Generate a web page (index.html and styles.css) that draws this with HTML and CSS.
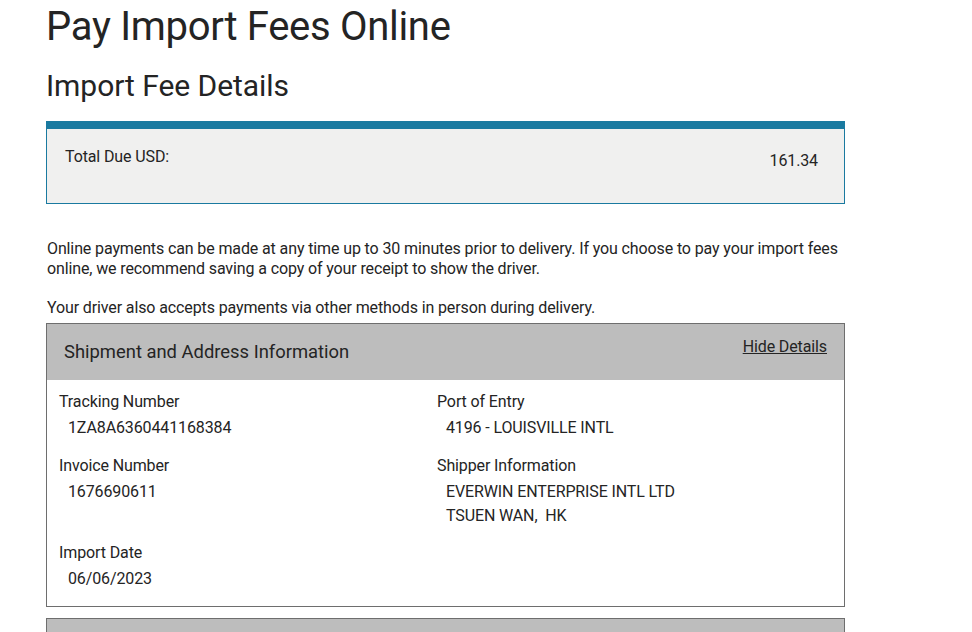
FILE: index.html
```html
<!DOCTYPE html>
<html lang="en">
<head>
    <meta charset="UTF-8">
    <meta name="viewport" content="width=device-width, initial-scale=1.0">
    <title>Pay Import Fees Online</title>
    <link rel="stylesheet" href="styles.css">
</head>
<body>
    <div class="page">
        <h1 class="page-title">Pay Import Fees Online</h1>
        <h2 class="section-title">Import Fee Details</h2>

        <div class="total-box">
            <span>Total Due USD:</span>
            <span class="amount">161.34</span>
        </div>

        <p class="note">Online payments can be made at any time up to 30 minutes prior to delivery. If you choose to pay your import fees online, we recommend saving a copy of your receipt to show the driver.</p>
        <p class="note note-last">Your driver also accepts payments via other methods in person during delivery.</p>

        <div class="panel">
            <div class="panel-header">
                <span class="panel-title">Shipment and Address Information</span>
                <a href="#" class="toggle">Hide Details</a>
            </div>
            <div class="panel-body">
                <div class="field">
                    <div class="label">Tracking Number</div>
                    <div class="value">1ZA8A6360441168384</div>
                </div>
                <div class="field">
                    <div class="label">Port of Entry</div>
                    <div class="value">4196 - LOUISVILLE INTL</div>
                </div>
                <div class="field">
                    <div class="label">Invoice Number</div>
                    <div class="value">1676690611</div>
                </div>
                <div class="field">
                    <div class="label">Shipper Information</div>
                    <div class="value">EVERWIN ENTERPRISE INTL LTD</div>
                    <div class="value value-next">TSUEN WAN,&nbsp; HK</div>
                </div>
                <div class="field">
                    <div class="label">Import Date</div>
                    <div class="value">06/06/2023</div>
                </div>
            </div>
        </div>

        <div class="panel panel-closed">
            <div class="panel-header"></div>
        </div>
    </div>
</body>
</html>
```

FILE: styles.css
```css
body {
    margin: 0;
    font-family: 'Roboto', 'Liberation Sans', sans-serif;
    color: #242424;
    background-color: #fff;
}

.page {
    width: 799px;
    padding-left: 46px;
}

.page-title {
    margin: 0;
    padding-top: 4px;
    font-size: 40px;
    font-weight: 400;
    line-height: 46px;
    letter-spacing: -0.3px;
}

.section-title {
    margin: 18px 0 0 0;
    font-size: 30px;
    font-weight: 400;
    line-height: 36px;
    letter-spacing: -0.05px;
}

.total-box {
    display: flex;
    justify-content: space-between;
    margin-top: 17px;
    height: 56px;
    padding: 18px 26px 0 18px;
    border: 1px solid #1a7aa0;
    border-top: 8px solid #1a7aa0;
    background-color: #f0f0ef;
    font-size: 16px;
    line-height: 20px;
    letter-spacing: -0.12px;
}

.total-box .amount {
    padding-top: 4px;
}

.note {
    margin: 0;
    padding-left: 1px;
    font-size: 16px;
    line-height: 20px;
    letter-spacing: -0.12px;
}

.note:first-of-type {
    margin-top: 35px;
}

.note-last {
    margin-top: 19px;
}

.panel {
    margin-top: 5px;
    border: 1px solid #6e6e6e;
}

.panel-header {
    display: flex;
    justify-content: space-between;
    height: 56px;
    padding: 0 17px;
    background-color: #bdbdbd;
}

.panel-title {
    padding-top: 17px;
    font-size: 18.4px;
    line-height: 22px;
}

.toggle {
    padding-top: 13px;
    color: #242424;
    font-size: 16px;
    line-height: 20px;
    letter-spacing: -0.12px;
}

.panel-body {
    display: grid;
    grid-template-columns: 378px 1fr;
    row-gap: 18px;
    padding: 12px 12px 17px;
    background-color: #fff;
}

.field {
    font-size: 16px;
    line-height: 20px;
    letter-spacing: -0.12px;
}

.label {
    margin-bottom: 6px;
}

.value {
    padding-left: 9px;
}

.value-next {
    margin-top: 4px;
    margin-bottom: -1px;
}

.panel-closed {
    margin-top: 11px;
}
```
